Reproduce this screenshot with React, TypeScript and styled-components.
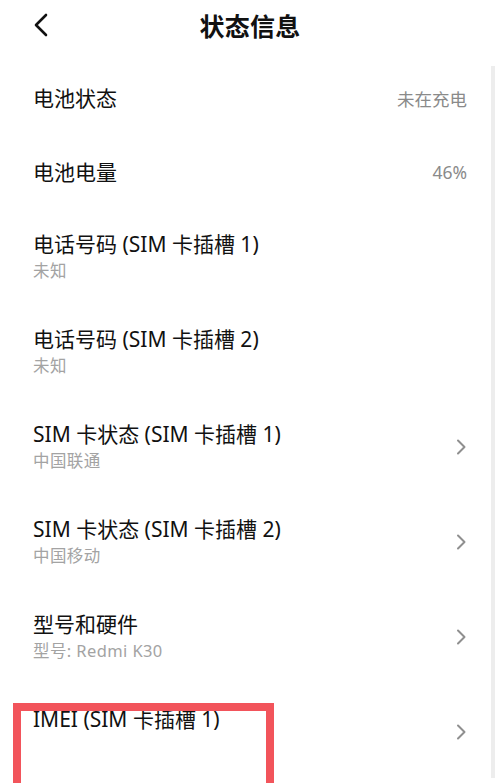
import React from 'react';
import styled, { createGlobalStyle } from 'styled-components';

const GlobalStyles = createGlobalStyle`
    html, body {
        margin: 0;
        padding: 0;
        background: #ffffff;
    }
    body {
        font-family: "Noto Sans", "Noto Sans CJK SC", sans-serif;
        color: #111111;
    }
`;

const Screen = styled.div`
    position: relative;
    width: 500px;
    height: 783px;
    overflow: hidden;
    background: #ffffff;
`;

const Header = styled.div`
    height: 50px;
    display: flex;
    align-items: center;
    justify-content: center;
    position: relative;
`;

const BackButton = styled.div`
    position: absolute;
    left: 33px;
    top: 13px;
    width: 16px;
    height: 24px;
    display: flex;
    align-items: center;
`;

const Title = styled.h1`
    margin: 0;
    font-size: 25px;
    font-weight: 700;
    letter-spacing: 0.3px;
    color: #111111;
`;

const List = styled.div`
    margin-top: 11px;
    display: flex;
    flex-direction: column;
`;

const Row = styled.div<{ $tall?: boolean }>`
    height: ${(p) => (p.$tall ? '95px' : '74px')};
    padding: 0 33px;
    display: flex;
    align-items: center;
    justify-content: space-between;
`;

const Texts = styled.div`
    display: flex;
    flex-direction: column;
`;

const Label = styled.div`
    font-size: 21px;
    line-height: 28px;
    color: #111111;
`;

const Sub = styled.div<{ $hidden?: boolean }>`
    font-size: 16.5px;
    line-height: 26px;
    letter-spacing: 0.4px;
    color: #a3a3a3;
    visibility: ${(p) => (p.$hidden ? 'hidden' : 'visible')};
`;

const Value = styled.div`
    font-size: 17.5px;
    color: #8a8a8a;
`;

const Chevron = styled.svg`
    width: 10px;
    height: 16px;
    margin-right: 1px;
`;

const ScrollTrack = styled.div`
    position: absolute;
    right: 5px;
    top: 66px;
    bottom: 5px;
    width: 4px;
    background: #ededed;
`;

const Highlight = styled.div`
    position: absolute;
    left: 13px;
    top: 703px;
    width: 245px;
    height: 100px;
    border: 8px solid #f2545b;
`;

type Item = {
    label: string;
    sub?: string;
    value?: string;
    arrow?: boolean;
    hideSub?: boolean;
};

const items: Item[] = [
    { label: '电池状态', value: '未在充电' },
    { label: '电池电量', value: '46%' },
    { label: '电话号码 (SIM 卡插槽 1)', sub: '未知' },
    { label: '电话号码 (SIM 卡插槽 2)', sub: '未知' },
    { label: 'SIM 卡状态 (SIM 卡插槽 1)', sub: '中国联通', arrow: true },
    { label: 'SIM 卡状态 (SIM 卡插槽 2)', sub: '中国移动', arrow: true },
    { label: '型号和硬件', sub: '型号: Redmi K30', arrow: true },
    { label: 'IMEI (SIM 卡插槽 1)', sub: '—', arrow: true, hideSub: true },
];

const App: React.FC = () => {
    return (
        <Screen>
            <GlobalStyles />
            <Header>
                <BackButton>
                    <svg width="16" height="24" viewBox="0 0 16 24">
                        <path
                            d="M13 2 L3 12 L13 22"
                            fill="none"
                            stroke="#111"
                            strokeWidth="2.6"
                            strokeLinecap="round"
                            strokeLinejoin="round"
                        />
                    </svg>
                </BackButton>
                <Title>状态信息</Title>
            </Header>
            <List>
                {items.map((item) => (
                    <Row key={item.label} $tall={!!item.sub}>
                        <Texts>
                            <Label>{item.label}</Label>
                            {item.sub && <Sub $hidden={item.hideSub}>{item.sub}</Sub>}
                        </Texts>
                        {item.value && <Value>{item.value}</Value>}
                        {item.arrow && (
                            <Chevron viewBox="0 0 10 16">
                                <path
                                    d="M2 1.5 L8.5 8 L2 14.5"
                                    fill="none"
                                    stroke="#8f8f8f"
                                    strokeWidth="2"
                                    strokeLinecap="round"
                                    strokeLinejoin="round"
                                />
                            </Chevron>
                        )}
                    </Row>
                ))}
            </List>
            <ScrollTrack />
            <Highlight />
        </Screen>
    );
};

export default App;
